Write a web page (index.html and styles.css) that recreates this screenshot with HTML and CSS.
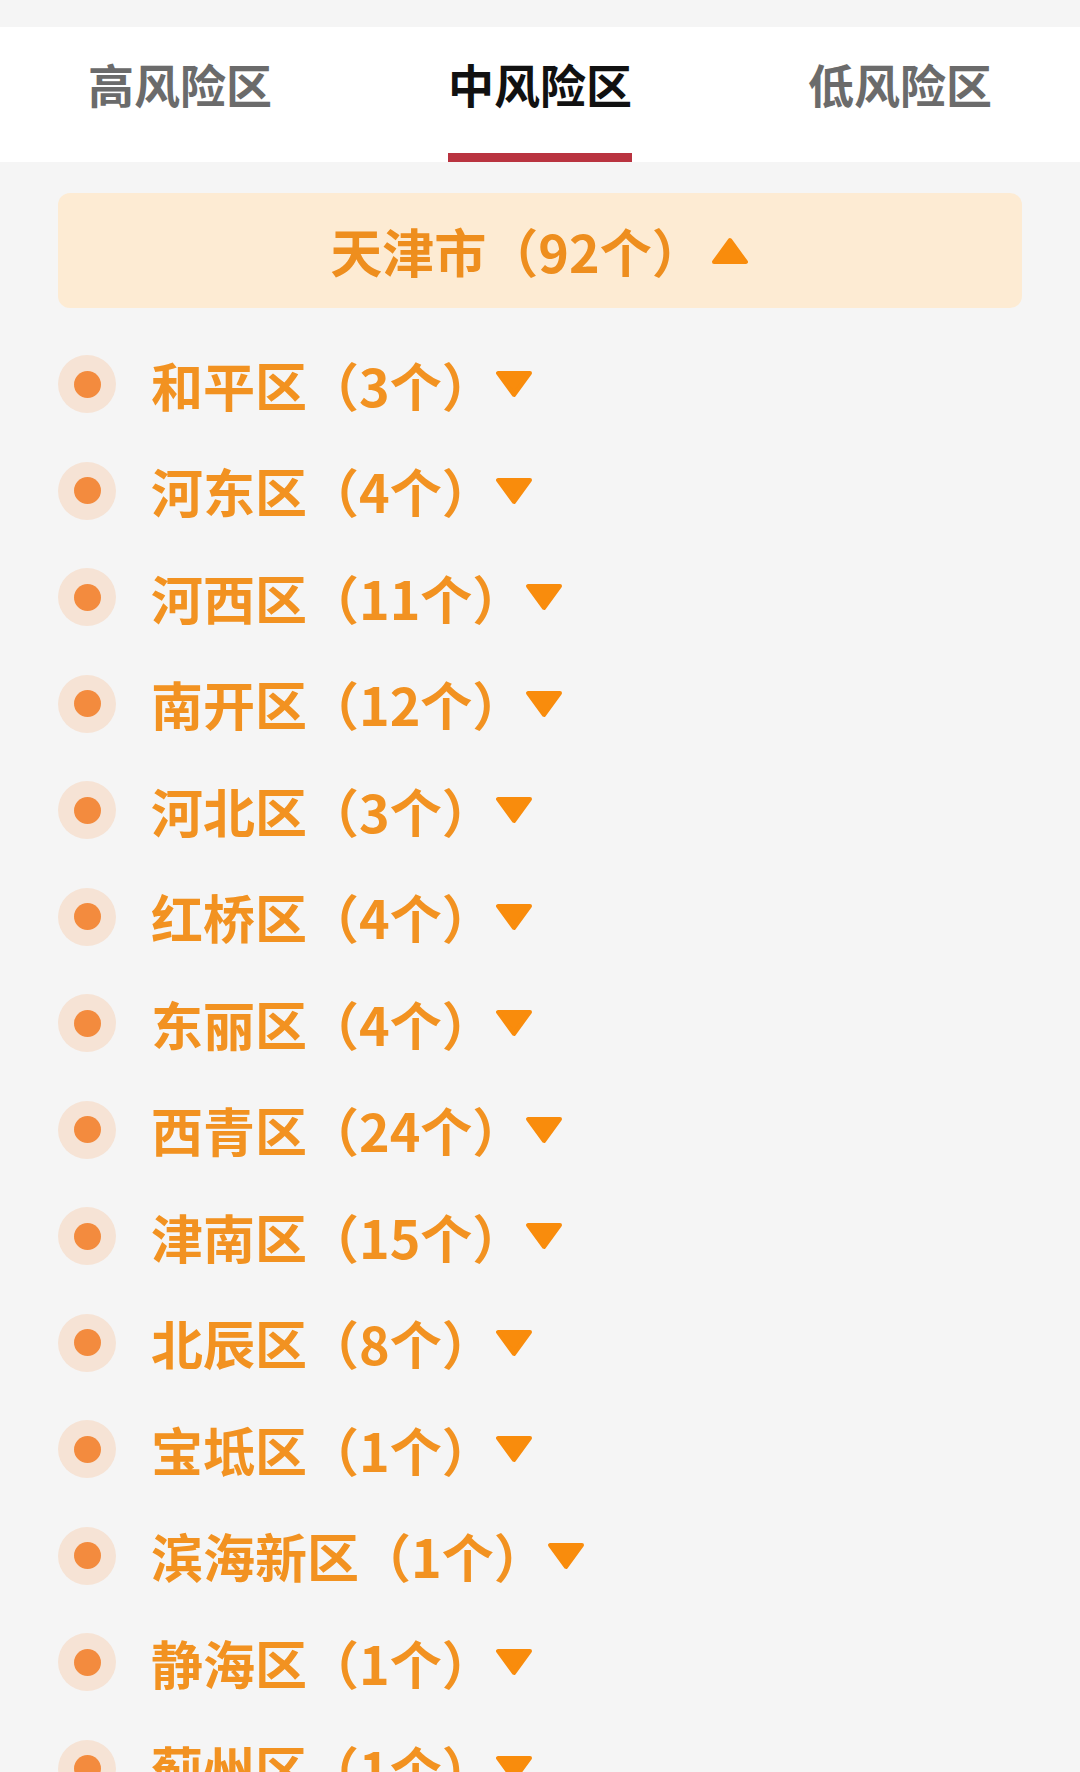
FILE: index.html
```html
<!DOCTYPE html>
<html lang="zh-CN">
<head>
    <meta charset="UTF-8">
    <meta name="viewport" content="width=device-width, initial-scale=1.0">
    <title>风险地区</title>
    <link rel="stylesheet" href="styles.css">
</head>
<body>

    <div class="tabs">
        <div class="tab"><span class="tab-label">高风险区</span></div>
        <div class="tab active"><span class="tab-label">中风险区</span></div>
        <div class="tab"><span class="tab-label">低风险区</span></div>
    </div>

    <div class="city">
        <span class="city-name">天津市（92个）</span>
        <svg class="arrow up" viewBox="0 0 40 30"><path d="M20 4 L36 26 L4 26 Z"/></svg>
    </div>

    <ul class="districts">
        <li><i class="dot"></i><span>和平区（3个）</span><svg class="arrow" viewBox="0 0 40 30"><path d="M4 4 L36 4 L20 26 Z"/></svg></li>
        <li><i class="dot"></i><span>河东区（4个）</span><svg class="arrow" viewBox="0 0 40 30"><path d="M4 4 L36 4 L20 26 Z"/></svg></li>
        <li><i class="dot"></i><span>河西区（11个）</span><svg class="arrow" viewBox="0 0 40 30"><path d="M4 4 L36 4 L20 26 Z"/></svg></li>
        <li><i class="dot"></i><span>南开区（12个）</span><svg class="arrow" viewBox="0 0 40 30"><path d="M4 4 L36 4 L20 26 Z"/></svg></li>
        <li><i class="dot"></i><span>河北区（3个）</span><svg class="arrow" viewBox="0 0 40 30"><path d="M4 4 L36 4 L20 26 Z"/></svg></li>
        <li><i class="dot"></i><span>红桥区（4个）</span><svg class="arrow" viewBox="0 0 40 30"><path d="M4 4 L36 4 L20 26 Z"/></svg></li>
        <li><i class="dot"></i><span>东丽区（4个）</span><svg class="arrow" viewBox="0 0 40 30"><path d="M4 4 L36 4 L20 26 Z"/></svg></li>
        <li><i class="dot"></i><span>西青区（24个）</span><svg class="arrow" viewBox="0 0 40 30"><path d="M4 4 L36 4 L20 26 Z"/></svg></li>
        <li><i class="dot"></i><span>津南区（15个）</span><svg class="arrow" viewBox="0 0 40 30"><path d="M4 4 L36 4 L20 26 Z"/></svg></li>
        <li><i class="dot"></i><span>北辰区（8个）</span><svg class="arrow" viewBox="0 0 40 30"><path d="M4 4 L36 4 L20 26 Z"/></svg></li>
        <li><i class="dot"></i><span>宝坻区（1个）</span><svg class="arrow" viewBox="0 0 40 30"><path d="M4 4 L36 4 L20 26 Z"/></svg></li>
        <li><i class="dot"></i><span>滨海新区（1个）</span><svg class="arrow" viewBox="0 0 40 30"><path d="M4 4 L36 4 L20 26 Z"/></svg></li>
        <li><i class="dot"></i><span>静海区（1个）</span><svg class="arrow" viewBox="0 0 40 30"><path d="M4 4 L36 4 L20 26 Z"/></svg></li>
        <li><i class="dot"></i><span>蓟州区（1个）</span><svg class="arrow" viewBox="0 0 40 30"><path d="M4 4 L36 4 L20 26 Z"/></svg></li>
    </ul>

</body>
</html>
```

FILE: styles.css
```css
body {
    margin: 0;
    background-color: #f5f5f5;
    font-family: "Noto Sans CJK SC", "Noto Sans", sans-serif;
}

.tabs {
    display: flex;
    margin-top: 27px;
    height: 135px;
    background-color: #fff;
}
.tab {
    flex: 1;
    text-align: center;
    padding-top: 29px;
}
.tab-label {
    display: inline-block;
    font-size: 46px;
    line-height: 54px;
    font-weight: bold;
    color: #6b6b6b;
    padding-bottom: 43px;
    border-bottom: 9px solid transparent;
}
.tab.active .tab-label {
    color: #111;
    border-bottom-color: #b93340;
}

.city {
    display: flex;
    align-items: center;
    justify-content: center;
    margin: 31px 58px 0;
    height: 115px;
    background-color: #fdebd3;
    border-radius: 12px;
    color: #ee8e1e;
    font-size: 52px;
    font-weight: bold;
}

.arrow {
    width: 40px;
    height: 30px;
    margin-left: 0;
    fill: #f98c0c;
    stroke: #f98c0c;
    stroke-width: 4;
    stroke-linejoin: round;
}
.arrow.up {
    margin-left: 6px;
}

.districts {
    list-style: none;
    margin: 23px 0 0;
    padding: 0 0 0 58px;
}
.districts li {
    display: flex;
    align-items: center;
    height: 106.5px;
    color: #f29221;
    font-size: 52px;
    font-weight: bold;
}
.dot {
    display: flex;
    align-items: center;
    justify-content: center;
    width: 58px;
    height: 58px;
    margin-right: 35px;
    border-radius: 50%;
    background-color: #f6e3d5;
}
.dot::before {
    content: "";
    width: 27px;
    height: 27px;
    border-radius: 50%;
    background-color: #f38b3e;
}
```
